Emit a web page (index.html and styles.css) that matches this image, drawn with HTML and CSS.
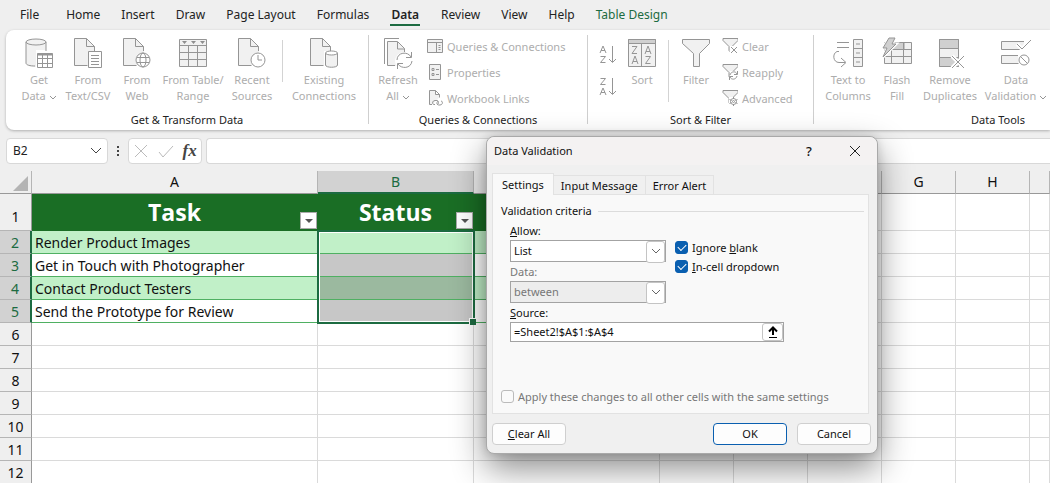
FILE: index.html
```html
<!DOCTYPE html>
<html lang="en">
<head>
<meta charset="utf-8">
<title>Data Validation</title>
<link rel="stylesheet" href="styles.css">
</head>
<body>
<svg class="defs" aria-hidden="true">
  <symbol id="page" viewBox="0 0 28 30"><path d="M1 1h12l8 8v18H1z" fill="#f1f1f1" stroke="none"/><path d="M20.500 13V8.500l-8-8H.500v27h13M12.500.500v8h8"/></symbol>
  <symbol id="chev" viewBox="0 0 8 5"><path d="M1 1l3 3 3-3"/></symbol>
  <symbol id="funnel" viewBox="0 0 18 16"><path d="M1 .500h15v2l-6 6v7l-3-3v-4L1 2.500z" fill="#f1f1f1"/></symbol>
</svg>

<nav class="menu">
  <button class="m-file">File</button><button>Home</button><button>Insert</button><button>Draw</button><button>Page Layout</button><button>Formulas</button><button class="active">Data</button><button>Review</button><button>View</button><button>Help</button><button class="design">Table Design</button>
</nav>

<section class="ribbon">
  <div class="group g-get">
    <div class="tools">
      <button class="tile w50"><svg class="ico" viewBox="0 0 28 30"><path d="M1 4v21c0 3 5 4 10 4V12h10V4z" fill="#f1f1f1" stroke="none"/><ellipse cx="11" cy="4" rx="10" ry="3" fill="#f1f1f1"/><path d="M1 4v21c0 2 4 3 9 3M21 4v9"/><path d="M12.500 15.500h15v14h-15z" fill="#fff"/><path d="M12.500 16.500h15" stroke-width="2"/><path d="M12 20.500h15M12 25.500h15M17.500 16v13M22.500 16v13"/></svg><span>Get<br>Data <svg class="chev"><use href="#chev"/></svg></span></button>
      <button class="tile w48"><svg class="ico" viewBox="0 0 28 30"><use href="#page" width="28" height="30"/><path d="M14.500 13.500h13v16h-13z" fill="#fff"/><path d="M17 17.500h8M17 20.500h8M17 23.500h8M17 26.500h8"/></svg><span>From<br>Text/CSV</span></button>
      <button class="tile w50"><svg class="ico" viewBox="0 0 28 30"><use href="#page" width="28" height="30"/><circle cx="20" cy="22" r="7" fill="#fff"/><ellipse cx="20" cy="22" rx="3" ry="7"/><path d="M14 19.500h12M14 24.500h12"/></svg><span>From<br>Web</span></button>
      <button class="tile w62"><svg class="ico" viewBox="0 0 28 30"><path d="M.500 1.500h27v27H.500z" fill="#f1f1f1"/><path d="M.500 7.500h27M.500 14.500h27M.500 21.500h27M9.500 8v20M18.500 8v20"/><path d="M3 3h5l-2.500 3zM12 3h5l-2.500 3zM21 3h5l-2.500 3z" fill="#8f8f8f" stroke="none"/></svg><span>From Table/<br>Range</span></button>
      <button class="tile w56"><svg class="ico" viewBox="0 0 28 30"><use href="#page" width="28" height="30"/><circle cx="20" cy="22" r="7" fill="#fff"/><path d="M20 17v5h4"/></svg><span>Recent<br>Sources</span></button>
      <i class="rule"></i>
      <button class="tile w78"><svg class="ico" viewBox="0 0 28 30"><use href="#page" width="28" height="30"/><path d="M14 13h14v16H14z" fill="#fff" stroke="none"/><path d="M15.500 15v12c0 3 12 3 12 0V15" fill="#f1f1f1"/><ellipse cx="21.500" cy="15" rx="6" ry="2" fill="#fff"/></svg><span>Existing<br>Connections</span></button>
    </div>
    <h2>Get &amp; Transform Data</h2>
  </div>
  <div class="group g-queries">
    <div class="tools">
      <button class="tile w58"><svg class="ico" viewBox="0 0 28 30"><path d="M4 4h10l7 7v17H4z" fill="#f1f1f1" stroke="none"/><path d="M15 .500H.500V26M11 27.500H3.500v-24h10l7 7V14M13.500 4v7h7"/><circle cx="20" cy="23" r="9" fill="#fff" stroke="none"/><path d="M13 22c0-8 11-9 14-3M27.500 14v5.500H22M28 23c-1 8-11 8-14 3M13.500 31v-5.500H19"/></svg><span>Refresh<br>All <svg class="chev"><use href="#chev"/></svg></span></button>
      <div class="list">
        <button><svg viewBox="0 0 16 16"><path d="M.500 1.500h15v13H.500z" fill="#f1f1f1"/><path d="M0 4.500h16M9.500 4v10M11.500 7.500h2M11.500 9.500h2M11.500 11.500h2"/></svg>Queries &amp; Connections</button>
        <button><svg viewBox="0 0 16 16"><path d="M2.500.500h11v15h-11z" fill="#f1f1f1"/><path d="M5 4.500h2v2H5zM5 9.500h2v2H5zM9 5.500h3M9 10.500h3"/></svg>Properties</button>
        <button><svg viewBox="0 0 16 16"><path d="M5 14.500H2.500V.500h6l4 4v3M8.500.500v4h4" fill="#f1f1f1"/><path d="M8 14.500H7c-2 0-2-4 1-4h2c2 0 2 4 0 4M11 11c-2 2-1 4 1 4h1c3 0 3-4 1-4"/></svg>Workbook Links</button>
      </div>
    </div>
    <h2>Queries &amp; Connections</h2>
  </div>
  <div class="group g-sort">
    <div class="tools">
      <div class="sorts">
        <button aria-label="Sort A to Z"><svg viewBox="0 0 18 20"><path d="M1 8l3-7 3 7M2 5.500h4M1.500 11.500h5l-5 6h5M13.500 1v16M10 14l3.500 3.500L17 14"/></svg></button>
        <button aria-label="Sort Z to A"><svg viewBox="0 0 18 20"><path d="M1.500 1.500h5l-5 6h5M1 18l3-7 3 7M2 15.500h4M13.500 1v16M10 14l3.500 3.500L17 14"/></svg></button>
      </div>
      <button class="tile w50"><svg class="ico" viewBox="0 0 28 30"><path d="M.500 1.500h27v27H.500z" fill="#f1f1f1"/><path d="M.500 1.500h27v4H.500z" fill="#d0d0d0"/><path d="M13.500 6v22M4 8.500h5l-5 7h5M4 26l3-8 3 8M5 23.500h4M17 16l3-8 3 8M18 13.500h4M17.500 18.500h5l-5 7h5"/></svg><span>Sort</span></button>
      <i class="rule tall"></i>
      <button class="tile w52"><svg class="ico" viewBox="0 0 28 30"><path d="M.500 1.500h27v4l-10 10v13h-6v-13l-11-10z" fill="#f1f1f1"/></svg><span>Filter</span></button>
      <div class="list">
        <button><svg viewBox="0 0 16 16"><use href="#funnel" width="18" height="16"/><path d="M8 8h8v8H8z" fill="#fff" stroke="none"/><path d="M9 9l6 6M15 9l-6 6"/></svg>Clear</button>
        <button><svg viewBox="0 0 16 16"><use href="#funnel" width="18" height="16"/><path d="M8 7h8v9H8z" fill="#fff" stroke="none"/><path d="M8 11c1-4 6-4 7-1M15.500 7v3.500H12M15 12c-1 4-6 4-7 1M7.500 16v-3.500H11"/></svg>Reapply</button>
        <button><svg viewBox="0 0 16 16"><use href="#funnel" width="18" height="16"/><path d="M7 7h9v9H7z" fill="#fff" stroke="none"/><circle cx="11.500" cy="11.500" r="3"/><circle cx="11.500" cy="11.500" r="1"/><path d="M11.500 7v2M11.500 14v2M7.500 9.500l2 1M13.500 12.500l2 1M7.500 13.500l2-1M13.500 10.500l2-1"/></svg>Advanced</button>
      </div>
    </div>
    <h2>Sort &amp; Filter</h2>
  </div>
  <div class="group g-tools">
    <div class="tools">
      <button class="tile w50"><svg class="ico wide" viewBox="0 0 30 30"><path d="M4 4.500h12M4 9.500h12M6 13.500H4c-5 2-4 11 2 11h6M8 20l5 4.500L8 29"/><path d="M20.500 1.500h9v27h-9z" fill="#f1f1f1"/><path d="M20 10.500h9M20 19.500h9M23 6h4M23 15h4M23 24h4"/></svg><span>Text to<br>Columns</span></button>
      <button class="tile w48"><svg class="ico wide" viewBox="0 0 30 30"><path d="M2.500 4.500h27v21h-27z" fill="#f1f1f1"/><path d="M12 4.500h10v7H9z" fill="#d0d0d0"/><path d="M2.500 11.500h27M2.500 18.500h27M9.500 12v14M21.500 5v21"/><path d="M7 0h6l-3 6h4L1 19l4-9H1z" fill="#d8d8d8" stroke="#fff" stroke-width="3"/><path d="M7 0h6l-3 6h4L1 19l4-9H1z" fill="#d0d0d0"/></svg><span>Flash<br>Fill</span></button>
      <button class="tile w58"><svg class="ico" viewBox="0 0 28 30"><path d="M3.500 1.500h19v27h-19z" fill="#f1f1f1"/><path d="M3.500 1.500h19v9h-19zM3.500 19.500h19v9h-19z" fill="#d0d0d0"/><path d="M16 18l12 12M28 18l-12 12" stroke="#fff" stroke-width="4"/><path d="M16 18l12 12M28 18l-12 12"/></svg><span>Remove<br>Duplicates</span></button>
      <button class="tile w74"><svg class="ico wide" viewBox="0 0 30 30"><path d="M23 3.500H.500v8h22M17 17.500H.500v8h17" fill="#f1f1f1"/><path d="M16 6l5 5 9-10" stroke="#fff" stroke-width="4"/><path d="M16 6l5 5 9-9"/><circle cx="23" cy="22" r="5" fill="#fff"/><path d="M19.500 18.500l7 7"/></svg><span>Data<br>Validation <svg class="chev"><use href="#chev"/></svg></span></button>
    </div>
    <h2>Data Tools</h2>
  </div>
</section>

<section class="formula">
  <button class="namebox"><span>B2</span><svg viewBox="0 0 12 7" width="12" height="7"><path d="M1 1l5 5 5-5"/></svg></button>
  <svg class="dots" viewBox="0 0 4 12"><path d="M1 1h2v2H1zM1 5h2v2H1zM1 9h2v2H1z" fill="#444"/></svg>
  <div class="fxbox">
    <button aria-label="Cancel entry"><svg viewBox="0 0 16 14"><path d="M2 1l12 12M14 1L2 13"/></svg></button>
    <button aria-label="Enter"><svg viewBox="0 0 16 14"><path d="M1 8l4 5L15 2"/></svg></button>
    <button class="fx">fx</button>
  </div>
  <input class="fxinput" aria-label="Formula bar">
</section>

<table class="sheet">
  <colgroup><col class="c-n"><col class="c-a"><col class="c-b"><col class="c-c"><col class="c-d"><col class="c-d"><col class="c-d"><col class="c-d"><col class="c-d"><col></colgroup>
  <thead><tr><th class="corner"><svg viewBox="0 0 15 15"><path d="M15 0v15H0z" fill="#b4b4b4"/></svg></th><th>A</th><th class="picked">B</th><th></th><th></th><th></th><th></th><th>G</th><th>H</th><th></th></tr></thead>
  <tbody>
    <tr class="head"><th>1</th><td><div>Task<button aria-label="Filter Task"><svg viewBox="0 0 8 4"><path d="M0 0h8L4 4z"/></svg></button></div></td><td><div>Status<button aria-label="Filter Status"><svg viewBox="0 0 8 4"><path d="M0 0h8L4 4z"/></svg></button></div></td><td></td><td></td><td></td><td></td><td></td><td></td><td></td></tr>
    <tr class="row band"><th>2</th><td>Render Product Images</td><td class="first"><span class="selection"></span></td><td></td><td></td><td></td><td></td><td></td><td></td><td></td></tr>
    <tr class="row"><th>3</th><td>Get in Touch with Photographer</td><td></td><td></td><td></td><td></td><td></td><td></td><td></td><td></td></tr>
    <tr class="row band"><th>4</th><td>Contact Product Testers</td><td></td><td></td><td></td><td></td><td></td><td></td><td></td><td></td></tr>
    <tr class="row"><th>5</th><td>Send the Prototype for Review</td><td></td><td></td><td></td><td></td><td></td><td></td><td></td><td></td></tr>
    <tr><th>6</th><td></td><td></td><td></td><td></td><td></td><td></td><td></td><td></td><td></td></tr>
    <tr><th>7</th><td></td><td></td><td></td><td></td><td></td><td></td><td></td><td></td><td></td></tr>
    <tr><th>8</th><td></td><td></td><td></td><td></td><td></td><td></td><td></td><td></td><td></td></tr>
    <tr><th>9</th><td></td><td></td><td></td><td></td><td></td><td></td><td></td><td></td><td></td></tr>
    <tr><th>10</th><td></td><td></td><td></td><td></td><td></td><td></td><td></td><td></td><td></td></tr>
    <tr><th>11</th><td></td><td></td><td></td><td></td><td></td><td></td><td></td><td></td><td></td></tr>
    <tr><th>12</th><td></td><td></td><td></td><td></td><td></td><td></td><td></td><td></td><td></td></tr>
  </tbody>
</table>

<form class="dialog" role="dialog" aria-labelledby="dlg-title">
  <header>
    <h1 id="dlg-title">Data Validation</h1>
    <button type="button" class="help">?</button>
    <button type="button" class="close" aria-label="Close"><svg viewBox="0 0 12 12"><path d="M1 1l10 10M11 1L1 11"/></svg></button>
  </header>
  <div class="tabs"><button type="button" class="on">Settings</button><button type="button">Input Message</button><button type="button">Error Alert</button></div>
  <div class="panel">
    <div class="legend">Validation criteria</div>
    <div class="fields">
      <div class="left">
        <label for="allow"><u>A</u>llow:</label>
        <div class="combo"><select id="allow"><option>List</option></select><svg viewBox="0 0 10 6"><path d="M1 1l4 4 4-4"/></svg></div>
        <label for="data" class="off">Data:</label>
        <div class="combo off"><select id="data" disabled><option>between</option></select><svg viewBox="0 0 10 6"><path d="M1 1l4 4 4-4"/></svg></div>
      </div>
      <div class="checks">
        <label><input type="checkbox" checked><span>Ignore <u>b</u>lank</span></label>
        <label><input type="checkbox" checked><span><u>I</u>n-cell dropdown</span></label>
      </div>
    </div>
    <div class="source">
      <label for="source"><u>S</u>ource:</label>
      <div class="ref"><input id="source" value="=Sheet2!$A$1:$A$4"><button type="button" aria-label="Collapse dialog"><svg viewBox="0 0 10 12"><path d="M5 9V2M1 5.500L5 1.500l4 4" stroke-width="2"/><path d="M1 11.500h8"/></svg></button></div>
    </div>
    <label class="apply off"><input type="checkbox" disabled><span>Apply these changes to all other cells with the same settings</span></label>
  </div>
  <footer><button type="button" class="clear"><span><u>C</u>lear All</span></button><button type="submit" class="ok">OK</button><button type="button">Cancel</button></footer>
</form>
</body>
</html>
```

FILE: styles.css
```css
* { box-sizing: border-box; }
html, body { height: 100%; }
body {
  margin: 0;
  position: relative;
  overflow: hidden;
  background: #efefef;
  color: #222;
  font-family: "Noto Sans", "Open Sans", sans-serif;
  font-size: 11px;
}
button { font: inherit; color: inherit; background: none; border: 0; padding: 0; }
h1, h2 { margin: 0; font-size: 11px; font-weight: 400; }
svg { fill: none; stroke: #959595; }
svg path[fill^="#b"], .dots path { stroke: none; }
.defs { position: absolute; width: 0; height: 0; }

.menu { display: flex; gap: 21px; height: 30px; padding: 6px 20px 0; font-size: 12px; line-height: 18px; }
.menu button { height: 20px; white-space: nowrap; padding-bottom: 2px; }
.menu .m-file { margin-right: 6px; }
.menu .active { font-weight: 600; border-bottom: 2px solid #1c6b41; padding: 0 1px; }
.menu .design { color: #1c6b41; }

.ribbon {
  display: flex;
  margin-left: 6px;
  height: 100px;
  overflow: hidden;
  background: #fff;
  border-radius: 8px 0 0 8px;
  box-shadow: 0 1px 3px #0004;
}
.group { flex: none; display: flex; flex-direction: column; position: relative; }
.group h2 { flex: none; line-height: 16px; text-align: center; color: #222; }
.group + .group { border-left: 1px solid #cfcfcf; margin: 5px 0 6px; }
.group + .group .tools { padding-top: 3px; height: 77px; }
.g-get { width: 362px; }
.g-queries { width: 219px; }
.g-sort { width: 226px; }
.g-tools { width: 369px; }
.tools { display: flex; flex: none; height: 82px; padding-top: 8px; color: #adadad; }
.g-get .tools { padding-left: 8px; }
.g-tools .tools { padding-left: 9px; }
.tile { display: flex; flex-direction: column; align-items: center; justify-content: flex-start; gap: 4px; line-height: 16px; white-space: nowrap; flex: none; }
.ico { width: 28px; height: 30px; overflow: visible; }
.ico.wide { width: 30px; }
.chev { width: 8px; height: 5px; vertical-align: middle; }
.w48 { width: 48px; } .w50 { width: 50px; } .w52 { width: 52px; } .w56 { width: 56px; }
.w58 { width: 58px; } .w62 { width: 62px; } .w74 { width: 74px; } .w78 { width: 78px; }
.rule { width: 1px; height: 42px; margin: 2px 2px 0; background: #d3d3d3; }
.rule.tall { height: 62px; margin: 2px 1px 0; }
.list { display: flex; flex-direction: column; gap: 10px; }
.list button { display: flex; align-items: center; gap: 4px; height: 16px; white-space: nowrap; }
.list svg { width: 16px; height: 16px; }
.sorts { display: flex; flex-direction: column; gap: 12px; padding: 7px 0 0 11px; width: 29px; }
.sorts svg { display: block; width: 18px; height: 20px; }

.formula { display: flex; align-items: center; height: 41px; padding-left: 6px; }
.namebox, .fxbox, .fxinput { height: 26px; background: #fff; border: 1px solid #d8d8d8; border-radius: 4px; }
.namebox { display: flex; align-items: center; justify-content: space-between; width: 102px; padding: 0 5px 0 6px; font-size: 12px; }
.namebox svg { stroke: #444; }
.dots { width: 4px; height: 12px; margin: 0 8px; }
.fxbox { display: flex; align-items: center; justify-content: space-around; width: 74px; margin-right: 4px; }
.fxbox svg { display: block; width: 16px; height: 14px; stroke: #bbb; }
.fx { font: italic 700 17px "Liberation Serif", serif; color: #444; }
.fxinput { flex: 1; border-right: 0; border-radius: 4px 0 0 4px; }

.sheet { width: 100%; table-layout: fixed; border-collapse: separate; border-spacing: 0; background: #fff; font-size: 14px; color: #111; }
.c-n { width: 32px; } .c-a { width: 286px; } .c-b { width: 156px; } .c-c { width: 186px; } .c-d { width: 74px; }
.sheet th, .sheet td { height: 23px; padding: 2px 0 0; border-right: 1px solid #dadada; border-bottom: 1px solid #dadada; line-height: 20px; white-space: nowrap; }
.sheet th { background: #efefef; font-weight: 400; border-color: #999; }
.sheet thead th { padding: 0; border-right-color: #b5b5b5; }
.sheet tbody th { border-bottom-color: #b5b5b5; }
.corner svg { display: block; width: 15px; height: 15px; margin: 2px 0 0 13px; }
.sheet thead .picked { background: #d2d2d2; color: #1c6b41; border-bottom: 2px solid #1c6b41; line-height: 19px; }
.sheet .head th { height: 37px; padding-top: 9px; }
.sheet .head td { height: 37px; padding: 0; }
.sheet .head td:nth-child(-n+4) { background: #1a6e25; border-color: #1a6e25; }
.head div { position: relative; text-align: center; font: 700 23px/36px "Open Sans", sans-serif; color: #fff; }
.head div button { position: absolute; right: 0; bottom: 1px; width: 17px; height: 17px; background: #fff; border: 1px solid #aaa; display: grid; place-items: center; }
.head div svg { width: 8px; height: 4px; fill: #555; stroke: none; }
.sheet .row th { background: #d2d2d2; color: #1c6b41; border-right: 2px solid #1c6b41; }
.sheet .row td:nth-child(2) { padding-left: 3px; }
.sheet .row td:nth-child(-n+4) { border-bottom-color: #4fb062; }
.sheet .band td:nth-child(-n+4) { background: #c1f0c8; border-right-color: #c1f0c8; }
.sheet .row td:nth-child(3) { background: #c7c7c7; }
.sheet .band td:nth-child(3) { background: #9bb99f; }
.sheet .band td.first:nth-child(3) { background: #c1f0c8; position: relative; }
.selection { position: absolute; left: -1px; top: -1px; width: 158px; height: 94px; border: 2px solid #1c6b41; box-shadow: inset 0 0 0 1px #fff; }
.selection::after { content: ""; position: absolute; right: -3px; bottom: -3px; width: 6px; height: 6px; background: #1c6b41; border: solid #fff; border-width: 1px 0 0 1px; }

.dialog {
  position: absolute;
  left: 486px;
  top: 136px;
  width: 392px;
  background: #f0f0f0;
  border: 1px solid #a9a9a9;
  border-radius: 8px;
  box-shadow: 0 14px 34px #0007, 0 0 8px #0002;
  color: #111;
  line-height: 16px;
}
.dialog svg { stroke: #222; }
.dialog header { display: flex; align-items: center; height: 28px; padding: 0 16px 0 7px; background: #f4f2f2; border-radius: 8px 8px 0 0; }
.dialog h1 { flex: 1; }
.help { width: 18px; font-size: 13px; font-weight: 500; }
.close { margin-left: 31px; width: 12px; height: 12px; }
.close svg { display: block; width: 12px; height: 12px; }
.tabs { display: flex; align-items: flex-end; padding: 8px 5px 0; }
.tabs button { height: 19px; padding: 1px 7px 0; border: 1px solid #e2e2e2; border-width: 1px 1px 0 0; }
.tabs .on { height: 22px; padding: 0 9px; background: #f9f9f9; border-left-width: 1px; margin-bottom: -1px; position: relative; }
.panel { margin: 0 8px 0 5px; padding: 8px 4px 7px 8px; background: #f9f9f9; border: 1px solid #e2e2e2; }
.legend { display: flex; align-items: center; gap: 6px; }
.legend::after { content: ""; flex: 1; height: 1px; background: #dcdcdc; }
.fields { display: flex; gap: 9px; padding: 4px 0 0 9px; }
.left { width: 156px; }
.left label, .source label { display: block; height: 17px; }
.combo { position: relative; height: 22px; margin-bottom: 2px; }
.combo select { appearance: none; width: 100%; height: 22px; padding: 0 3px; font: inherit; color: #111; background: #fff; border: 1px solid #a3a3a3; border-radius: 0; opacity: 1; }
.combo::after { content: ""; position: absolute; right: 1px; top: 1px; width: 17px; height: 20px; background: #fff; border: 1px solid #c4c4c4; border-radius: 3px; pointer-events: none; }
.combo svg { position: absolute; z-index: 1; right: 5px; top: 8px; width: 10px; height: 6px; stroke: #666; pointer-events: none; }
.off, .combo.off select { color: #777; }
.combo.off select { background: #ededed; }
.checks { padding-top: 15px; }
.checks label, .apply { display: flex; align-items: center; gap: 4px; height: 19px; white-space: nowrap; }
input[type="checkbox"] { appearance: none; margin: 0; width: 13px; height: 13px; border: 1px solid #bbb; border-radius: 3px; background: #fafafa; display: grid; place-items: center; }
input[type="checkbox"]:checked { background: #0a5fb0; border-color: #0a5fb0; }
input[type="checkbox"]:checked::after { content: ""; width: 7px; height: 4px; margin-bottom: 2px; border: solid #fff; border-width: 0 0 1px 1px; transform: rotate(-45deg); }
.source { width: 283px; padding-left: 9px; }
.ref { display: flex; height: 20px; background: #fff; border: 1px solid #a3a3a3; }
.ref input { flex: 1; min-width: 0; border: 0; padding: 0 3px; font: inherit; color: #111; background: none; }
.ref button { width: 21px; height: 18px; border: 1px solid #c4c4c4; border-radius: 3px; display: grid; place-items: center; }
.ref svg { width: 10px; height: 12px; stroke: #000; }
.apply { margin-top: 45px; }
.dialog footer { display: flex; gap: 10px; padding: 9px 6px 8px 5px; }
.dialog footer button { width: 74px; height: 22px; background: #fdfdfd; border: 1px solid #cfcfcf; border-radius: 4px; }
.dialog footer .clear { margin-right: auto; }
.dialog footer .ok { border-color: #0a5fb0; }
```
